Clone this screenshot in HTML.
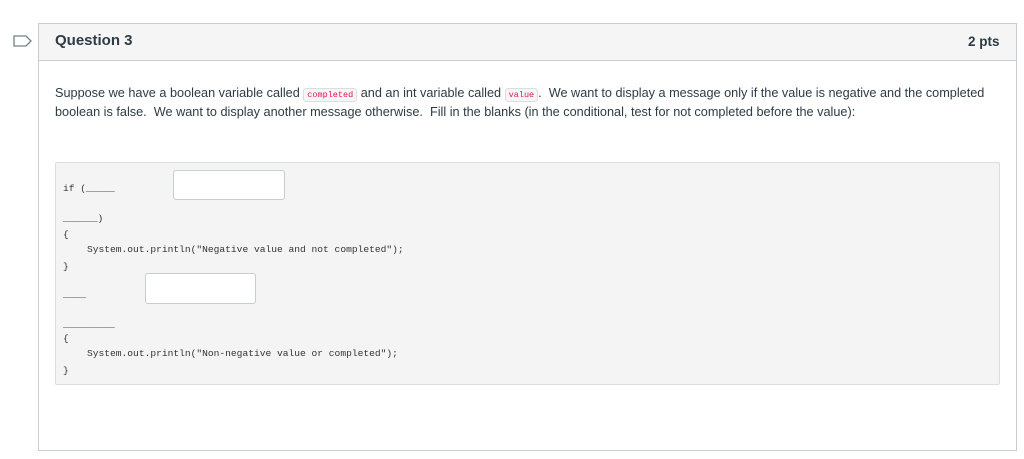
<!DOCTYPE html>
<html><head><style>
body{margin:0;width:1024px;height:459px;background:#fff;position:relative;font-family:"Liberation Sans",sans-serif;color:#2d3b45;overflow:hidden}
.box{position:absolute;left:38px;top:23px;width:977px;height:426px;border:1px solid #c7cdd1}
.hdr{position:absolute;left:0;top:0;right:0;height:36px;background:#f5f5f5;border-bottom:1px solid #c7cdd1}
.t{position:absolute;white-space:nowrap}
.mono{font-family:"Liberation Mono",monospace;font-size:9.6px;color:#333;position:absolute;white-space:pre}
code{font-family:"Liberation Mono",monospace;font-size:8.5px;color:#e0115f;background:#f5f5f5;border:1px solid #ddd;border-radius:3px;padding:1px 3px}
.in{position:absolute;background:#fff;border:1px solid #c7cdd1;border-radius:3px}
</style></head><body>
<svg style="position:absolute;left:13px;top:35px" width="20" height="12"><path d="M1 1H13L18 6L13 11H1Z" fill="none" stroke="#73818c" stroke-width="1.3"/></svg>
<div class="box"><div class="hdr"></div></div>
<div class="t" style="left:55px;top:32px;font-size:15px;font-weight:bold;color:#2d3b45">Question 3</div>
<div class="t" style="left:968px;top:34px;font-size:13.5px;font-weight:bold">2 pts</div>
<div class="t" style="left:55px;top:86px;font-size:12.7px">Suppose we have a boolean variable called <code>completed</code> and an int variable called <code>value</code>.&nbsp; We want to display a message only if the value is negative and the completed</div>
<div class="t" style="left:55px;top:105px;font-size:12.7px">boolean is false.&nbsp; We want to display another message otherwise.&nbsp; Fill in the blanks (in the conditional, test for not completed before the value):</div>
<div style="position:absolute;left:55px;top:162px;width:943px;height:221px;background:#f4f4f4;border:1px solid #ddd;border-radius:2px"></div>
<div class="in" style="left:173px;top:170px;width:110px;height:28px"></div>
<div class="in" style="left:145px;top:273px;width:109px;height:29px"></div>
<div class="mono" style="left:63px;top:183px">if (_____</div>
<div class="mono" style="left:63px;top:213px">______)</div>
<div class="mono" style="left:63px;top:229px">{</div>
<div class="mono" style="left:87px;top:244px">System.out.println("Negative value and not completed");</div>
<div class="mono" style="left:63px;top:261px">}</div>
<div class="mono" style="left:63px;top:289px">____</div>
<div class="mono" style="left:63px;top:319px">_________</div>
<div class="mono" style="left:63px;top:333px">{</div>
<div class="mono" style="left:87px;top:348px">System.out.println("Non-negative value or completed");</div>
<div class="mono" style="left:63px;top:365px">}</div>
</body></html>
